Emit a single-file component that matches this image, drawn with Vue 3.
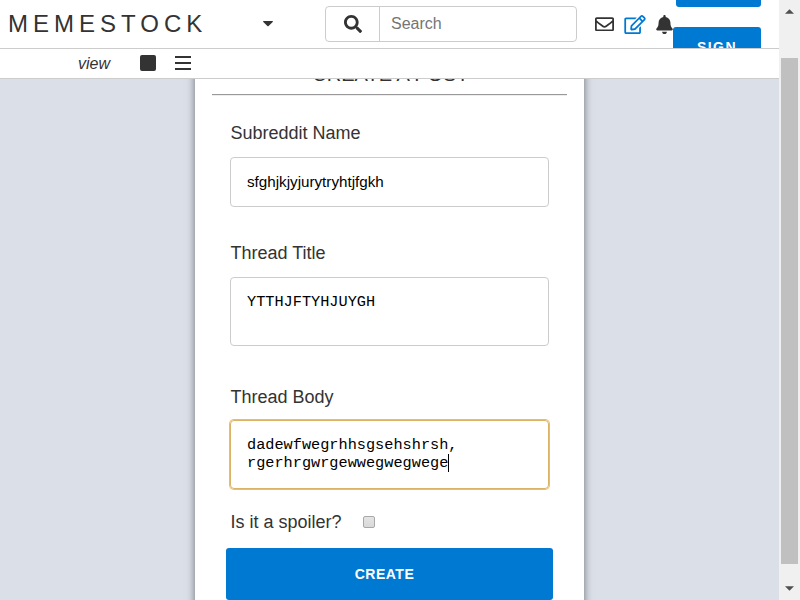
<script setup>
import { ref } from 'vue'

const name = ref('sfghjkjyjurytryhtjfgkh')
const title = ref('YTTHJFTYHJUYGH')
const bodyLines = ref(['dadewfwegrhhsgsehshrsh,', 'rgerhrgwrgewwegwegwege'])
</script>

<template>
  <div class="page">
    <div class="main">
      <header class="topbar">
        <span class="logo">MEMESTOCK</span>
        <svg class="caret" viewBox="0 0 10 6"><path d="M.6 0h8.8q.9.3.3 1L5.6 5q-.6.6-1.2 0L.3 1Q-.3.3.6 0z" /></svg>
        <div class="search">
          <div class="search-btn">
            <svg class="search-icon" viewBox="0 0 512 512"><path d="M505 442.7L405.3 343c-4.5-4.5-10.6-7-17-7H372c27.600-35.300 44-79.700 44-128C416 93.100 322.900 0 208 0S0 93.100 0 208s93.100 208 208 208c48.300 0 92.700-16.400 128-44v16.300c0 6.400 2.500 12.500 7 17l99.700 99.700c9.400 9.400 24.600 9.400 33.900 0l28.300-28.300c9.400-9.400 9.400-24.600.1-34zM208 336c-70.700 0-128-57.200-128-128 0-70.700 57.200-128 128-128 70.700 0 128 57.200 128 128 0 70.700-57.200 128-128 128z" /></svg>
          </div>
          <span class="placeholder">Search</span>
        </div>
        <svg class="mail" viewBox="0 0 512 384"><path d="M464 0H48C21.490 0 0 21.490 0 48v288c0 26.510 21.490 48 48 48h416c26.510 0 48-21.490 48-48V48c0-26.510-21.490-48-48-48zm0 48v40.805c-22.422 18.259-58.168 46.651-134.587 106.490-16.841 13.247-50.201 45.072-73.413 44.701-23.208.375-56.579-31.459-73.413-44.701C106.180 135.465 70.425 107.067 48 88.805V48h416zM48 336V150.398c22.914 18.251 55.409 43.862 104.938 82.646 21.857 17.205 60.134 55.186 103.062 54.955 42.717.231 80.509-37.199 103.053-54.947 49.528-38.783 82.032-64.401 104.947-82.653V336H48z" /></svg>
        <svg class="edit" viewBox="0 0 576 512"><path d="M402.300 344.900l32-32c5-5 13.700-1.500 13.700 5.700V464c0 26.500-21.500 48-48 48H48c-26.500 0-48-21.500-48-48V112c0-26.500 21.500-48 48-48h273.500c7.100 0 10.700 8.600 5.700 13.700l-32 32c-1.500 1.500-3.500 2.300-5.700 2.300H48v352h352V350.500c0-2.100.8-4.100 2.300-5.600zm156.600-201.800L296.300 405.700l-90.400 10c-26.200 2.900-48.500-19.200-45.600-45.600l10-90.400L432.900 17.100c22.900-22.900 59.900-22.900 82.700 0l43.200 43.200c22.900 22.900 22.900 60 .1 82.800zM460.100 174L402 115.900 216.200 301.800l-7.300 65.300 65.300-7.300L460.100 174zm64.800-79.700l-43.200-43.200c-4.100-4.100-10.800-4.100-14.800 0L436 82l58.100 58.100 30.900-30.900c4-4.200 4-10.800-.1-14.900z" /></svg>
        <svg class="bell" viewBox="0 0 448 512"><path d="M224 512c35.320 0 63.970-28.650 63.970-64H160.030c0 35.350 28.650 64 63.970 64zm215.390-149.710c-19.320-20.760-55.470-51.990-55.470-154.290 0-77.700-54.480-139.900-127.940-155.160V32c0-17.670-14.320-32-31.980-32s-31.980 14.330-31.980 32v20.840C118.560 68.100 64.080 130.300 64.080 208c0 102.300-36.150 133.530-55.470 154.290-6 6.450-8.660 14.160-8.610 21.710.11 16.400 12.980 32 32.100 32h383.800c19.120 0 32-15.600 32.100-32 .05-7.550-2.610-15.270-8.610-21.710z" /></svg>
        <div class="auth">
          <div class="auth-btn login"></div>
          <div class="auth-btn signup">SIGN</div>
        </div>
      </header>
      <nav class="viewbar">
        <span class="view">view</span>
        <span class="square"></span>
        <span class="bars"><i></i><i></i><i></i></span>
      </nav>
      <section class="content">
        <form class="card" @submit.prevent>
          <h2 class="heading">CREATE A POST</h2>
          <div class="rule"></div>
          <label class="label first">Subreddit Name</label>
          <div class="field name">{{ name }}</div>
          <label class="label second">Thread Title</label>
          <div class="field area">{{ title }}</div>
          <label class="label third">Thread Body</label>
          <div class="field area focused">
            <div v-for="(line, i) in bodyLines" :key="i" class="line">{{ line }}<span v-if="i === bodyLines.length - 1" class="cursor"></span></div>
          </div>
          <div class="spoiler">
            <span>Is it a spoiler?</span>
            <span class="check"></span>
          </div>
          <button class="create">CREATE</button>
        </form>
      </section>
    </div>
    <aside class="scrollbar">
      <svg class="arrow" viewBox="0 0 10 5"><path d="M5 0l5 5H0z" /></svg>
      <div class="thumb"></div>
      <svg class="arrow down" viewBox="0 0 10 5"><path d="M0 0h10L5 5z" /></svg>
    </aside>
  </div>
</template>

<style>
body {
  margin: 0;
  overflow: hidden;
}
</style>

<style scoped>
.page {
  display: flex;
  width: 800px;
  height: 600px;
  overflow: hidden;
  background: #fff;
  color: #333;
  font-family: "Liberation Sans", Arial, sans-serif;
}
.page * {
  box-sizing: border-box;
}
svg {
  display: block;
  flex: none;
  fill: currentColor;
}
.main {
  display: flex;
  flex-direction: column;
  width: 779px;
  height: 600px;
}
.topbar {
  display: flex;
  align-items: center;
  flex: none;
  height: 49px;
  padding-left: 8px;
  overflow: hidden;
  border-bottom: 1px solid #ccc;
}
.logo {
  width: 255px;
  font-size: 24px;
  letter-spacing: 5px;
  line-height: 48px;
}
.caret {
  width: 10px;
  height: 6px;
  margin-right: 52px;
}
.search {
  display: flex;
  flex: none;
  width: 252px;
  height: 36px;
  border: 1px solid #ccc;
  border-radius: 4px;
}
.search-btn {
  display: flex;
  align-items: center;
  justify-content: center;
  width: 54px;
  border-right: 1px solid #ccc;
}
.search-icon {
  width: 18px;
  height: 18px;
}
.placeholder {
  padding-left: 11px;
  font-size: 16px;
  line-height: 34px;
  color: #757575;
}
.mail {
  width: 19px;
  height: 14.500px;
  margin-left: 18px;
}
.edit {
  width: 22px;
  height: 19px;
  margin-left: 10px;
  color: #0079d3;
}
.bell {
  width: 17px;
  height: 19px;
  margin-left: 10px;
}
.auth {
  display: flex;
  flex-direction: column;
  align-items: flex-end;
  align-self: flex-start;
  gap: 20px;
  width: 88px;
}
.auth-btn {
  flex: none;
  background: #0079d3;
  color: #fff;
}
.login {
  width: 85px;
  height: 7px;
  border-radius: 0 0 3px 3px;
}
.signup {
  width: 88px;
  height: 40px;
  padding-top: 12px;
  border-radius: 3px;
  font-size: 14px;
  font-weight: 700;
  letter-spacing: 1.500px;
  line-height: 16px;
  text-align: center;
}
.viewbar {
  display: flex;
  align-items: center;
  flex: none;
  height: 30px;
  padding-left: 78px;
  border-bottom: 1px solid #ccc;
}
.view {
  width: 62px;
  font-size: 16px;
  font-style: italic;
}
.square {
  width: 16px;
  height: 16px;
  margin-top: -1px;
  border-radius: 2px;
  background: #333;
}
.bars {
  display: flex;
  flex-direction: column;
  gap: 4px;
  margin: -1px 0 0 19px;
}
.bars i {
  width: 16px;
  height: 2px;
  background: #333;
}
.content {
  display: flex;
  justify-content: center;
  flex: 1;
  min-height: 0;
  overflow: hidden;
  background: #dadfe8;
}
.card {
  display: flex;
  flex-direction: column;
  flex: none;
  width: 389px;
  height: 600px;
  margin-top: -20px;
  padding: 0 17px;
  background: #fff;
  box-shadow: 0 0 8px rgba(0, 0, 0, 0.5);
}
.heading {
  height: 35px;
  margin: 0;
  padding: 4px 0 0 2px;
  font-size: 20px;
  font-weight: 400;
  line-height: 23px;
  text-align: center;
}
.rule {
  width: 355px;
  height: 2px;
  border-top: 1px solid #999;
  border-bottom: 1px solid #eee;
}
.label {
  height: 20px;
  margin-left: 18.500px;
  font-size: 18px;
  line-height: 20px;
}
.first {
  margin-top: 27px;
}
.second {
  margin-top: 36px;
}
.third {
  margin-top: 41px;
}
.field {
  flex: none;
  width: 319px;
  margin-left: 18px;
  padding: 15px 16px;
  border: 1px solid #ccc;
  border-radius: 4px;
  color: #000;
}
.name {
  height: 50px;
  margin-top: 14px;
  font-size: 15.200px;
  line-height: 18px;
}
.area {
  height: 69px;
  margin-top: 14px;
  font-family: "Courier New", "Liberation Mono", monospace;
  font-size: 15.250px;
  line-height: 18px;
}
.focused {
  height: 69px;
  margin-top: 13px;
  border-color: #dcb264;
  box-shadow: 0 0 0 1px #f0bd5e;
}
.line {
  display: flex;
  height: 18px;
}
.cursor {
  width: 1px;
  height: 18px;
  background: #000;
}
.spoiler {
  display: flex;
  align-items: center;
  flex: none;
  height: 20px;
  margin: 23px 0 0 18.500px;
  font-size: 18px;
}
.check {
  width: 12px;
  height: 12px;
  margin: -1px 0 0 21.500px;
  border: 1px solid #a8a8a8;
  border-radius: 2px;
  background: linear-gradient(#e4e4e4, #d9d9d9);
}
.create {
  flex: none;
  width: 327px;
  height: 52px;
  margin: 16px 0 0 14px;
  padding: 0 10px 0 0;
  border: 0;
  border-radius: 3px;
  background: #0079d3;
  color: #fff;
  font-family: inherit;
  font-size: 14px;
  font-weight: 700;
  letter-spacing: 0.500px;
}
.scrollbar {
  display: flex;
  flex-direction: column;
  align-items: center;
  width: 21px;
  height: 600px;
  padding-top: 9px;
  background: #f0f0f0;
}
.arrow {
  width: 9px;
  height: 5px;
  color: #505050;
}
.thumb {
  width: 17px;
  height: 506px;
  margin: 44px 0 22px;
  background: #c0c0c0;
}
</style>
